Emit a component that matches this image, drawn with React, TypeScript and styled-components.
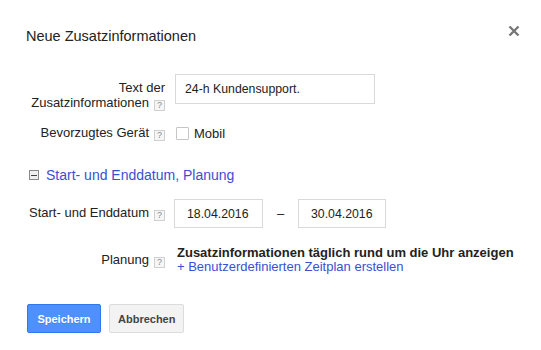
import { FC } from "react"
import styled, { createGlobalStyle } from "styled-components"

const Global = createGlobalStyle`
    html, body {
        margin: 0;
        padding: 0;
        background: #fff;
    }
    body {
        font-family: "Liberation Sans", Arial, sans-serif;
        color: #222;
    }
`

const Dialog = styled.div`
    width: 541px;
    height: 350px;
    box-sizing: border-box;
    padding: 0 21px 0 25px;
    background: #fff;
`

const Head = styled.div`
    display: flex;
    justify-content: space-between;
    align-items: flex-start;
    padding-top: 26px;
`

const Title = styled.h1`
    margin: 0 0 0 1px;
    font-size: 14.5px;
    font-weight: 400;
    line-height: 20px;
    color: #222;
`

const Close = styled.button`
    width: 12px;
    height: 12px;
    margin-top: -1px;
    padding: 0;
    border: none;
    background: none;
    display: flex;
    cursor: pointer;
`

const Row = styled.div<{ $top: number; $center?: boolean }>`
    display: grid;
    grid-template-columns: 140px 1fr;
    column-gap: 10px;
    align-items: ${(p) => (p.$center ? "center" : "start")};
    margin-top: ${(p) => p.$top}px;
`

const Label = styled.div<{ $pad?: number }>`
    text-align: right;
    font-size: 13px;
    line-height: 15px;
    color: #222;
    padding-top: ${(p) => p.$pad ?? 0}px;
`

const Line = styled.div`
    display: block;
`

const Help = styled.span`
    display: inline-block;
    box-sizing: border-box;
    width: 11px;
    height: 11px;
    margin-left: 5px;
    border: 1px solid #d0d0d0;
    background: #f6f6f6;
    color: #888;
    font-size: 9px;
    line-height: 9px;
    text-align: center;
    vertical-align: -1px;
`

const TextInput = styled.div<{ $w: number; $h: number; $pl: number }>`
    width: ${(p) => p.$w}px;
    height: ${(p) => p.$h}px;
    box-sizing: border-box;
    border: 1px solid #d9d9d9;
    padding-left: ${(p) => p.$pl}px;
    display: flex;
    align-items: center;
    font-size: 12.3px;
    color: #222;
`

const Check = styled.label`
    display: flex;
    align-items: center;
    gap: 5px;
    margin-left: 1px;
    font-size: 13px;
    line-height: 15px;
    color: #222;
`

const Box = styled.span`
    width: 13px;
    height: 13px;
    box-sizing: border-box;
    border: 1px solid #c6c6c6;
    border-radius: 1px;
    background: #fff;
`

const Toggle = styled.div`
    display: flex;
    align-items: center;
    gap: 7px;
    margin: 26px 0 0 4px;
    font-size: 14px;
    line-height: 16px;
    color: #3c4ed2;
`

const Minus = styled.span`
    width: 10px;
    height: 10px;
    box-sizing: border-box;
    border: 1px solid #8a8a8a;
    background: #f0f0f0;
    display: flex;
    align-items: center;
    justify-content: center;
    &::after {
        content: "";
        width: 6px;
        height: 1px;
        background: #444;
    }
`

const Dates = styled.div`
    display: flex;
    align-items: center;
    margin-left: -1px;
`

const Dash = styled.span`
    width: 35px;
    text-align: center;
    font-size: 13px;
    color: #222;
`

const Schedule = styled.div`
    display: flex;
    flex-direction: column;
    margin-left: 2px;
    font-size: 13px;
    line-height: 14px;
`

const Strong = styled.div`
    font-weight: 700;
    color: #222;
`

const Link = styled.a`
    color: #3c4ed2;
    text-decoration: none;
    cursor: pointer;
`

const Buttons = styled.div`
    display: flex;
    gap: 8px;
    margin: 30px 0 0 2px;
`

const Button = styled.button<{ $primary?: boolean }>`
    min-width: 74px;
    height: 29px;
    padding: 0 8px;
    box-sizing: border-box;
    border-radius: 2px;
    font-family: "Liberation Sans", Arial, sans-serif;
    font-size: 11px;
    font-weight: 700;
    cursor: pointer;
    border: 1px solid ${(p) => (p.$primary ? "#3079ed" : "#dcdcdc")};
    background: ${(p) => (p.$primary ? "#4d90fe" : "#f3f3f3")};
    color: ${(p) => (p.$primary ? "#fff" : "#444")};
    text-shadow: ${(p) => (p.$primary ? "0 1px rgba(0,0,0,0.1)" : "none")};
`

const App: FC = () => {
    return (
        <Dialog>
            <Global />
            <Head>
                <Title>Neue Zusatzinformationen</Title>
                <Close aria-label="Schließen">
                    <svg width="12" height="12" viewBox="0 0 12 12">
                        <path d="M1.5 1.5L10.5 10.5M10.5 1.5L1.5 10.5" stroke="#777" strokeWidth="2.4" />
                    </svg>
                </Close>
            </Head>

            <Row $top={28}>
                <Label $pad={6}>
                    <Line>Text der</Line>
                    <Line>
                        <span>Zusatzinformationen</span>
                        <Help>?</Help>
                    </Line>
                </Label>
                <TextInput $w={200} $h={30} $pl={9}>24-h Kundensupport.</TextInput>
            </Row>

            <Row $top={14} $center>
                <Label>
                    <span>Bevorzugtes Gerät</span>
                    <Help>?</Help>
                </Label>
                <Check>
                    <Box />
                    Mobil
                </Check>
            </Row>

            <Toggle>
                <Minus />
                Start- und Enddatum, Planung
            </Toggle>

            <Row $top={16}>
                <Label $pad={6}>
                    <span>Start- und Enddatum</span>
                    <Help>?</Help>
                </Label>
                <Dates>
                    <TextInput $w={89} $h={29} $pl={12}>18.04.2016</TextInput>
                    <Dash>–</Dash>
                    <TextInput $w={88} $h={29} $pl={12}>30.04.2016</TextInput>
                </Dates>
            </Row>

            <Row $top={18} $center>
                <Label>
                    <span>Planung</span>
                    <Help>?</Help>
                </Label>
                <Schedule>
                    <Strong>Zusatzinformationen täglich rund um die Uhr anzeigen</Strong>
                    <Link>+ Benutzerdefinierten Zeitplan erstellen</Link>
                </Schedule>
            </Row>

            <Buttons>
                <Button $primary>Speichern</Button>
                <Button>Abbrechen</Button>
            </Buttons>
        </Dialog>
    )
}

export default App
